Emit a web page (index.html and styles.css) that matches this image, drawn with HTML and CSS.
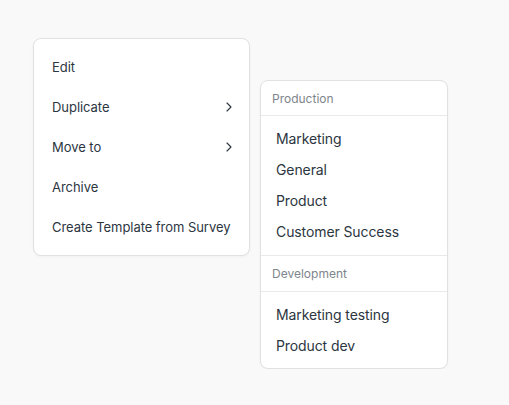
FILE: index.html
```html
<!DOCTYPE html>
<html lang="en">
<head>
  <meta charset="UTF-8">
  <meta name="viewport" content="width=device-width, initial-scale=1.0">
  <title>Survey actions</title>
  <link rel="stylesheet" href="styles.css">
</head>
<body>
  <div class="stage">
    <!-- Main actions menu -->
    <ul class="menu actions">
      <li class="item">Edit</li>
      <li class="item">Duplicate
        <svg class="chevron" viewBox="0 0 6 10" width="6" height="10"><path d="M1 1l4 4-4 4" /></svg>
      </li>
      <li class="item">Move to
        <svg class="chevron" viewBox="0 0 6 10" width="6" height="10"><path d="M1 1l4 4-4 4" /></svg>
      </li>
      <li class="item">Archive</li>
      <li class="item">Create Template from Survey</li>
    </ul>

    <!-- Folder submenu for "Move to" -->
    <div class="menu folders">
      <div class="group-title">Production</div>
      <ul class="group">
        <li class="folder">Marketing</li>
        <li class="folder">General</li>
        <li class="folder">Product</li>
        <li class="folder">Customer Success</li>
      </ul>
      <div class="group-title">Development</div>
      <ul class="group">
        <li class="folder">Marketing testing</li>
        <li class="folder">Product dev</li>
      </ul>
    </div>
  </div>
</body>
</html>
```

FILE: styles.css
```css
* {
  box-sizing: border-box;
}

body {
  margin: 0;
  background-color: #f9f9f9;
  font-family: Inter, "Open Sans", Arial, sans-serif;
  color: #2c3641;
}

.stage {
  display: flex;
  align-items: flex-start;
  gap: 10px;
  padding: 38px 0 0 33px;
}

ul {
  list-style: none;
  margin: 0;
  padding: 0;
}

.menu {
  background: white;
  border: 1px solid #dfe1e3;
  border-radius: 8px;
  box-shadow: 0 1px 3px rgba(0, 0, 0, 0.04);
}

.actions {
  width: 217px;
  padding: 8px 0;
}

.item {
  display: flex;
  align-items: center;
  justify-content: space-between;
  height: 40px;
  padding: 0 17px 0 18px;
  font-size: 13px;
  letter-spacing: -0.05px;
}

.chevron {
  fill: none;
  stroke: #2c3641;
  stroke-width: 1.1;
  stroke-linecap: round;
  stroke-linejoin: round;
}

.folders {
  width: 188px;
  margin-top: 42px;
}

.group-title {
  height: 35px;
  display: flex;
  align-items: center;
  padding: 0 11px;
  font-size: 12px;
  color: #7e858c;
  border-bottom: 1px solid #e7e9eb;
}

.group {
  padding: 7px 0 8px;
}

.group + .group-title {
  height: 37px;
  border-top: 1px solid #e7e9eb;
}

.group:last-child {
  padding-bottom: 7px;
}

.folder {
  display: flex;
  align-items: center;
  height: 31px;
  padding: 0 15px;
  font-size: 14px;
  letter-spacing: -0.1px;
}
```
